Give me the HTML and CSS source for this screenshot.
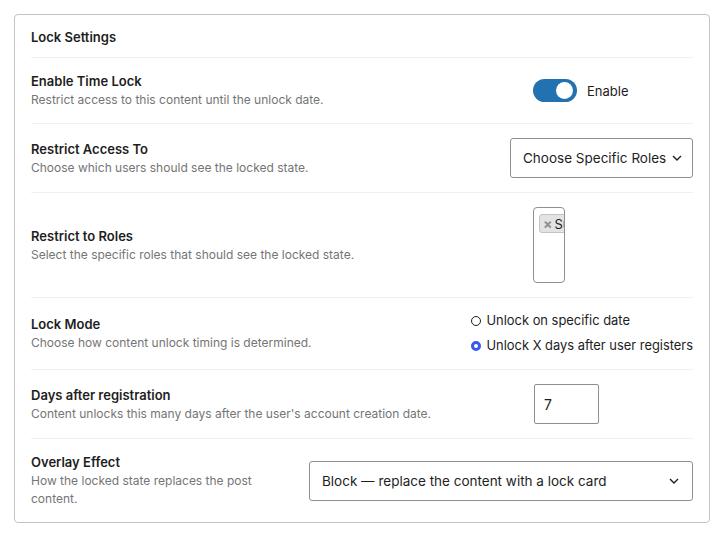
FILE: index.html
```html
<!DOCTYPE html>
<html lang="en">
<head>
  <meta charset="UTF-8">
  <meta name="viewport" content="width=device-width, initial-scale=1.0">
  <link rel="stylesheet" href="styles.css">
  <title>Lock Settings</title>
</head>
<body>
  <div class="panel">
    <div class="panel_head">Lock Settings</div>

    <div class="row">
      <div class="info">
        <div class="label">Enable Time Lock</div>
        <div class="desc">Restrict access to this content until the unlock date.</div>
      </div>
      <div class="control">
        <label class="toggle_wrap">
          <span class="toggle"><span class="knob"></span></span>
          <span class="toggle_text">Enable</span>
        </label>
      </div>
    </div>

    <div class="row">
      <div class="info">
        <div class="label">Restrict Access To</div>
        <div class="desc">Choose which users should see the locked state.</div>
      </div>
      <div class="control">
        <div class="select select_roles">
          <span>Choose Specific Roles</span>
          <svg class="chevron" width="12" height="12" viewBox="0 0 12 12"><path d="M2 4l4 4 4-4" fill="none" stroke="#1e1e1e" stroke-width="1.4"/></svg>
        </div>
      </div>
    </div>

    <div class="row">
      <div class="info">
        <div class="label">Restrict to Roles</div>
        <div class="desc">Select the specific roles that should see the locked state.</div>
      </div>
      <div class="control">
        <div class="multi">
          <span class="chip"><span class="chip_x">×</span>Subscriber</span>
        </div>
      </div>
    </div>

    <div class="row">
      <div class="info">
        <div class="label">Lock Mode</div>
        <div class="desc">Choose how content unlock timing is determined.</div>
      </div>
      <div class="control">
        <div class="radios">
          <div class="radio"><span class="dot"></span>Unlock on specific date</div>
          <div class="radio"><span class="dot checked"></span>Unlock X days after user registers</div>
        </div>
      </div>
    </div>

    <div class="row">
      <div class="info">
        <div class="label">Days after registration</div>
        <div class="desc">Content unlocks this many days after the user's account creation date.</div>
      </div>
      <div class="control">
        <div class="number">7</div>
      </div>
    </div>

    <div class="row">
      <div class="info info_narrow">
        <div class="label">Overlay Effect</div>
        <div class="desc">How the locked state replaces the post content.</div>
      </div>
      <div class="control">
        <div class="select select_wide">
          <span>Block — replace the content with a lock card</span>
          <svg class="chevron" width="12" height="12" viewBox="0 0 12 12"><path d="M2 4l4 4 4-4" fill="none" stroke="#1e1e1e" stroke-width="1.4"/></svg>
        </div>
      </div>
    </div>
  </div>

  <div class="panel panel_next"></div>
</body>
</html>
```

FILE: styles.css
```css
* {
  box-sizing: border-box;
}

body {
  margin: 0;
  padding: 14px;
  background: #fff;
  font-family: Inter, "Noto Sans", sans-serif;
  color: #1e1e1e;
  overflow: hidden;
  height: 535px;
}

.panel {
  border: 1px solid #c3c4c7;
  border-radius: 4px;
  padding: 0 16px;
  background: #fff;
}

.panel_next {
  margin-top: 12px;
  height: 40px;
}

.panel_head {
  padding: 13px 0 11px;
  line-height: 18px;
  font-size: 13px;
  font-weight: 600;
  border-bottom: 1px solid #f0f0f0;
}

.row {
  display: flex;
  flex-direction: row;
  align-items: center;
  justify-content: space-between;
  padding: 14px 0;
  border-bottom: 1px solid #f0f0f0;
}

.row:last-child {
  border-bottom: none;
}

.info {
  flex: 1;
}

.info_narrow {
  flex: 0 0 240px;
}

.label {
  font-size: 13px;
  font-weight: 600;
  line-height: 18px;
}

.desc {
  margin-top: 1px;
  font-size: 12px;
  line-height: 18px;
  color: #757575;
}

.control {
  display: flex;
  justify-content: flex-start;
  min-width: 160px;
}

.toggle_wrap {
  display: flex;
  align-items: center;
  font-size: 13px;
}

.toggle {
  position: relative;
  width: 44px;
  height: 23px;
  border-radius: 12px;
  background: #2271b1;
}

.knob {
  position: absolute;
  top: 3px;
  right: 4px;
  width: 17px;
  height: 17px;
  border-radius: 50%;
  background: #fff;
}

.toggle_text {
  margin-left: 10px;
}

.select {
  display: flex;
  align-items: center;
  justify-content: space-between;
  height: 40px;
  padding: 0 10px 0 12px;
  border: 1px solid #8c8f94;
  border-radius: 3px;
  font-size: 13.5px;
  white-space: nowrap;
  background: #fff;
}

.select_roles {
  width: 183px;
  padding-right: 9px;
}

.select_wide {
  width: 384px;
  padding-right: 12px;
}

.multi {
  width: 32px;
  height: 76px;
  border: 1px solid #8c8f94;
  border-radius: 4px;
  padding: 5px 0 0 5px;
  overflow: hidden;
}

.chip {
  display: inline-flex;
  align-items: center;
  height: 19px;
  padding: 0 3px;
  border: 1px solid #c3c4c7;
  border-radius: 3px;
  background: #e3e3e3;
  font-size: 13px;
  white-space: nowrap;
}

.chip_x {
  color: #8c8f94;
  font-size: 14px;
  font-weight: 700;
  margin-right: 2px;
}

.radios {
  display: flex;
  flex-direction: column;
  gap: 7px;
}

.radio {
  display: flex;
  align-items: center;
  font-size: 12.9px;
  line-height: 18px;
}

.dot {
  width: 10px;
  height: 10px;
  margin-right: 6px;
  border-radius: 50%;
  border: 1px solid #1e1e1e;
}

.dot.checked {
  border: 3px solid #3858e9;
}

.number {
  display: flex;
  align-items: center;
  width: 65px;
  height: 40px;
  margin-left: 1px;
  padding-left: 9px;
  border: 1px solid #8c8f94;
  border-radius: 2px;
  font-size: 14px;
}
```
